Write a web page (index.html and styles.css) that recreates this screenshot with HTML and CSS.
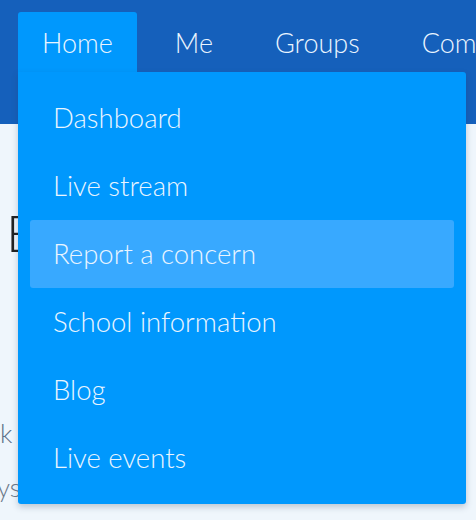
FILE: index.html
```html
<!DOCTYPE html>
<html lang="en">
<head>
<meta charset="utf-8">
<title>Home menu</title>
<link rel="stylesheet" href="styles.css">
</head>
<body>
  <header class="topbar">
    <nav class="nav">
      <ul class="nav-list">
        <li class="nav-item is-open">
          <a class="nav-link" href="#">Home</a>
          <ul class="dropdown">
            <li><a class="dropdown-link" href="#">Dashboard</a></li>
            <li><a class="dropdown-link" href="#">Live stream</a></li>
            <li><a class="dropdown-link is-hover" href="#">Report a concern</a></li>
            <li><a class="dropdown-link" href="#">School information</a></li>
            <li><a class="dropdown-link" href="#">Blog</a></li>
            <li><a class="dropdown-link" href="#">Live events</a></li>
          </ul>
        </li>
        <li class="nav-item"><a class="nav-link" href="#">Me</a></li>
        <li class="nav-item"><a class="nav-link" href="#">Groups</a></li>
        <li class="nav-item"><a class="nav-link" href="#">Community</a></li>
      </ul>
    </nav>
  </header>
  <main class="page">
    <h1 class="page-title">Events</h1>
    <p class="page-link">k</p>
    <p class="page-text">ys</p>
  </main>
</body>
</html>
```

FILE: styles.css
```css
* { box-sizing: border-box; }

html, body {
  margin: 0;
  padding: 0;
}

body {
  background: #eff6fc;
  font-family: Lato, "Open Sans", sans-serif;
  width: 476px;
  height: 520px;
  overflow: hidden;
}

.topbar {
  background: #1560bb;
  height: 124px;
}

.nav {
  padding: 12px 0 0 18px;
}

.nav-list {
  list-style: none;
  margin: 0;
  padding: 0;
  display: flex;
  gap: 14px;
  white-space: nowrap;
}

.nav-item {
  position: relative;
}

.nav-link {
  display: block;
  height: 60px;
  line-height: 62px;
  padding: 0 24px;
  font-size: 27px;
  font-weight: 300;
  color: #eaf5ff;
  text-decoration: none;
  border-radius: 3px 3px 0 0;
}

.is-open > .nav-link {
  background: #0098fd;
}

.dropdown {
  position: absolute;
  top: 60px;
  left: 0;
  width: 448px;
  margin: 0;
  padding: 12px;
  list-style: none;
  background: #0098fd;
  border-radius: 0 3px 3px 3px;
  box-shadow: 0 3px 6px rgba(40, 60, 90, 0.25);
  z-index: 10;
}

.dropdown-link {
  display: block;
  height: 68px;
  line-height: 68px;
  padding: 0 24px 0 23px;
  font-size: 27.5px;
  font-weight: 300;
  color: #eaf5ff;
  text-decoration: none;
  border-radius: 3px;
}

.dropdown-link.is-hover {
  background: #38a9ff;
}

.page {
  padding: 0 0 0 6px;
}

.page-title {
  margin: 78px 0 0;
  font-size: 52px;
  font-weight: 300;
  line-height: 60px;
  color: #222;
}

.page-link {
  margin: 154px 0 0 -6px;
  font-size: 26px;
  font-weight: 300;
  line-height: 34px;
  color: #5b6f87;
}

.page-text {
  margin: 20px 0 0 -9px;
  font-size: 26px;
  font-weight: 300;
  line-height: 34px;
  color: #6c7a8a;
}
```
